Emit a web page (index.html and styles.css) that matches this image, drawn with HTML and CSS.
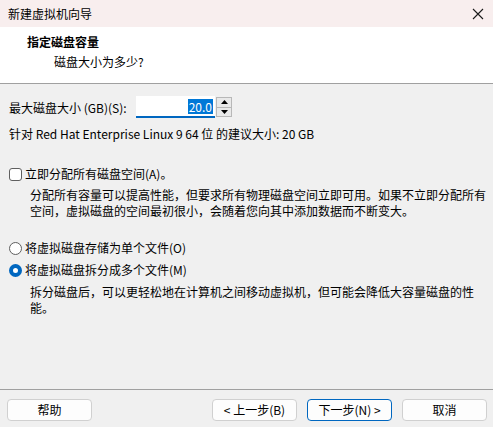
FILE: index.html
```html
<!DOCTYPE html>
<html lang="zh-CN">
<head>
<meta charset="utf-8">
<title>新建虚拟机向导</title>
<link rel="stylesheet" href="styles.css">
</head>
<body>
<div class="window">
  <div class="titlebar">
    <span class="title">新建虚拟机向导</span>
    <svg class="close" width="12" height="12" viewBox="0 0 12 12"><path d="M1 1 L11 11 M11 1 L1 11" stroke="#1a1a1a" stroke-width="1.1" fill="none"/></svg>
  </div>
  <div class="header">
    <div class="h-title">指定磁盘容量</div>
    <div class="h-sub">磁盘大小为多少?</div>
  </div>
  <div class="content">
    <div class="size-row">
      <span class="size-label">最大磁盘大小 (GB)(S):</span>
      <div class="input"><span class="sel">20.0</span></div>
      <div class="spin">
        <div class="spin-btn"><svg width="7" height="4" viewBox="0 0 7 4"><path d="M0 4 L3.5 0 L7 4 Z" fill="#000"/></svg></div>
        <div class="spin-btn"><svg width="7" height="4" viewBox="0 0 7 4"><path d="M0 0 L3.5 4 L7 0 Z" fill="#000"/></svg></div>
      </div>
    </div>
    <div class="recommend">针对 Red Hat Enterprise Linux 9 64 位 的建议大小: 20 GB</div>
    <div class="option check-opt">
      <span class="checkbox"></span>
      <span>立即分配所有磁盘空间(A)。</span>
    </div>
    <p class="desc desc1">分配所有容量可以提高性能，但要求所有物理磁盘空间立即可用。如果不立即分配所有空间，虚拟磁盘的空间最初很小，会随着您向其中添加数据而不断变大。</p>
    <div class="option radio-opt1">
      <span class="radio"></span>
      <span>将虚拟磁盘存储为单个文件(O)</span>
    </div>
    <div class="option radio-opt2">
      <span class="radio checked"></span>
      <span>将虚拟磁盘拆分成多个文件(M)</span>
    </div>
    <p class="desc desc2">拆分磁盘后，可以更轻松地在计算机之间移动虚拟机，但可能会降低大容量磁盘的性<br>能。</p>
  </div>
  <div class="footer">
    <button class="btn">帮助</button>
    <div class="spacer"></div>
    <button class="btn">&lt; 上一步(B)</button>
    <button class="btn primary">下一步(N) &gt;</button>
    <button class="btn">取消</button>
  </div>
</div>
</body>
</html>
```
FILE: styles.css
```css
* { box-sizing: border-box; }
html, body { margin: 0; padding: 0; }
body {
  background: #f0f0f0;
  font-family: "Noto Sans CJK SC", "Noto Sans", sans-serif;
  font-size: 12px;
  color: #000;
}
.window {
  display: flex;
  flex-direction: column;
  height: 100vh;
}
.titlebar {
  height: 27px;
  background: #f8eeee;
  display: flex;
  align-items: center;
  padding: 0 8px;
  justify-content: space-between;
}
.title { line-height: 16px; }
.close { margin-right: 1px; }
.header {
  background: #fff;
  height: 57px;
  border-bottom: 1px solid #a0a0a0;
  padding: 6px 0 0 27px;
}
.h-title {
  font-weight: bold;
  line-height: 16px;
  margin-top: 1px;
}
.h-sub {
  margin-top: 4px;
  padding-left: 27px;
  line-height: 16px;
}
.content {
  padding: 12px 4px 0 9px;
  flex: 1;
}
.size-row {
  display: flex;
  align-items: center;
  height: 22px;
}
.size-label { width: 127px; }
.input {
  width: 79px;
  height: 22px;
  background: #fff;
  border-bottom: 2px solid #0067c0;
  display: flex;
  align-items: center;
  justify-content: flex-end;
  padding-right: 2px;
}
.sel {
  background: #0078d7;
  color: #fff;
  line-height: 15px;
  padding: 0 1px;
}
.spin {
  margin-left: 1px;
  width: 16px;
  height: 20px;
  display: flex;
  flex-direction: column;
  border: 1px solid #b8b8b8;
  background: #e9e9e9;
}
.spin-btn {
  flex: 1;
  display: flex;
  align-items: center;
  justify-content: center;
}
.spin-btn + .spin-btn { border-top: 1px solid #b8b8b8; }
.recommend {
  margin-top: 8px;
  line-height: 16px;
}
.option {
  display: flex;
  align-items: center;
  height: 16px;
  line-height: 16px;
}
.check-opt { margin-top: 24px; }
.checkbox {
  width: 13px;
  height: 13px;
  border: 1px solid #5f5f5f;
  border-radius: 3px;
  background: #fff;
  margin-right: 3px;
}
.radio {
  width: 13px;
  height: 13px;
  border: 1px solid #5f5f5f;
  border-radius: 50%;
  background: #fff;
  margin-right: 3px;
}
.radio.checked {
  border: 4px solid #0067c0;
  background: #fff;
}
.desc {
  margin: 5px 0 0 0;
  padding-left: 21px;
  line-height: 16px;
}
.radio-opt1 { margin-top: 21px; }
.radio-opt2 { margin-top: 6px; }
.desc2 { margin-top: 6px; }
.footer {
  border-top: 1px solid #a0a0a0;
  display: flex;
  padding: 9px 6px 6px 7px;
  gap: 10px;
}
.spacer { flex: 1; }
.btn {
  width: 85px;
  height: 22px;
  background: #fdfdfd;
  border: 1px solid #d0d0d0;
  border-radius: 4px;
  font-family: inherit;
  font-size: 12px;
  color: #000;
  padding: 0;
  line-height: 18px;
}
.btn.primary { border-color: #0067c0; }
```
